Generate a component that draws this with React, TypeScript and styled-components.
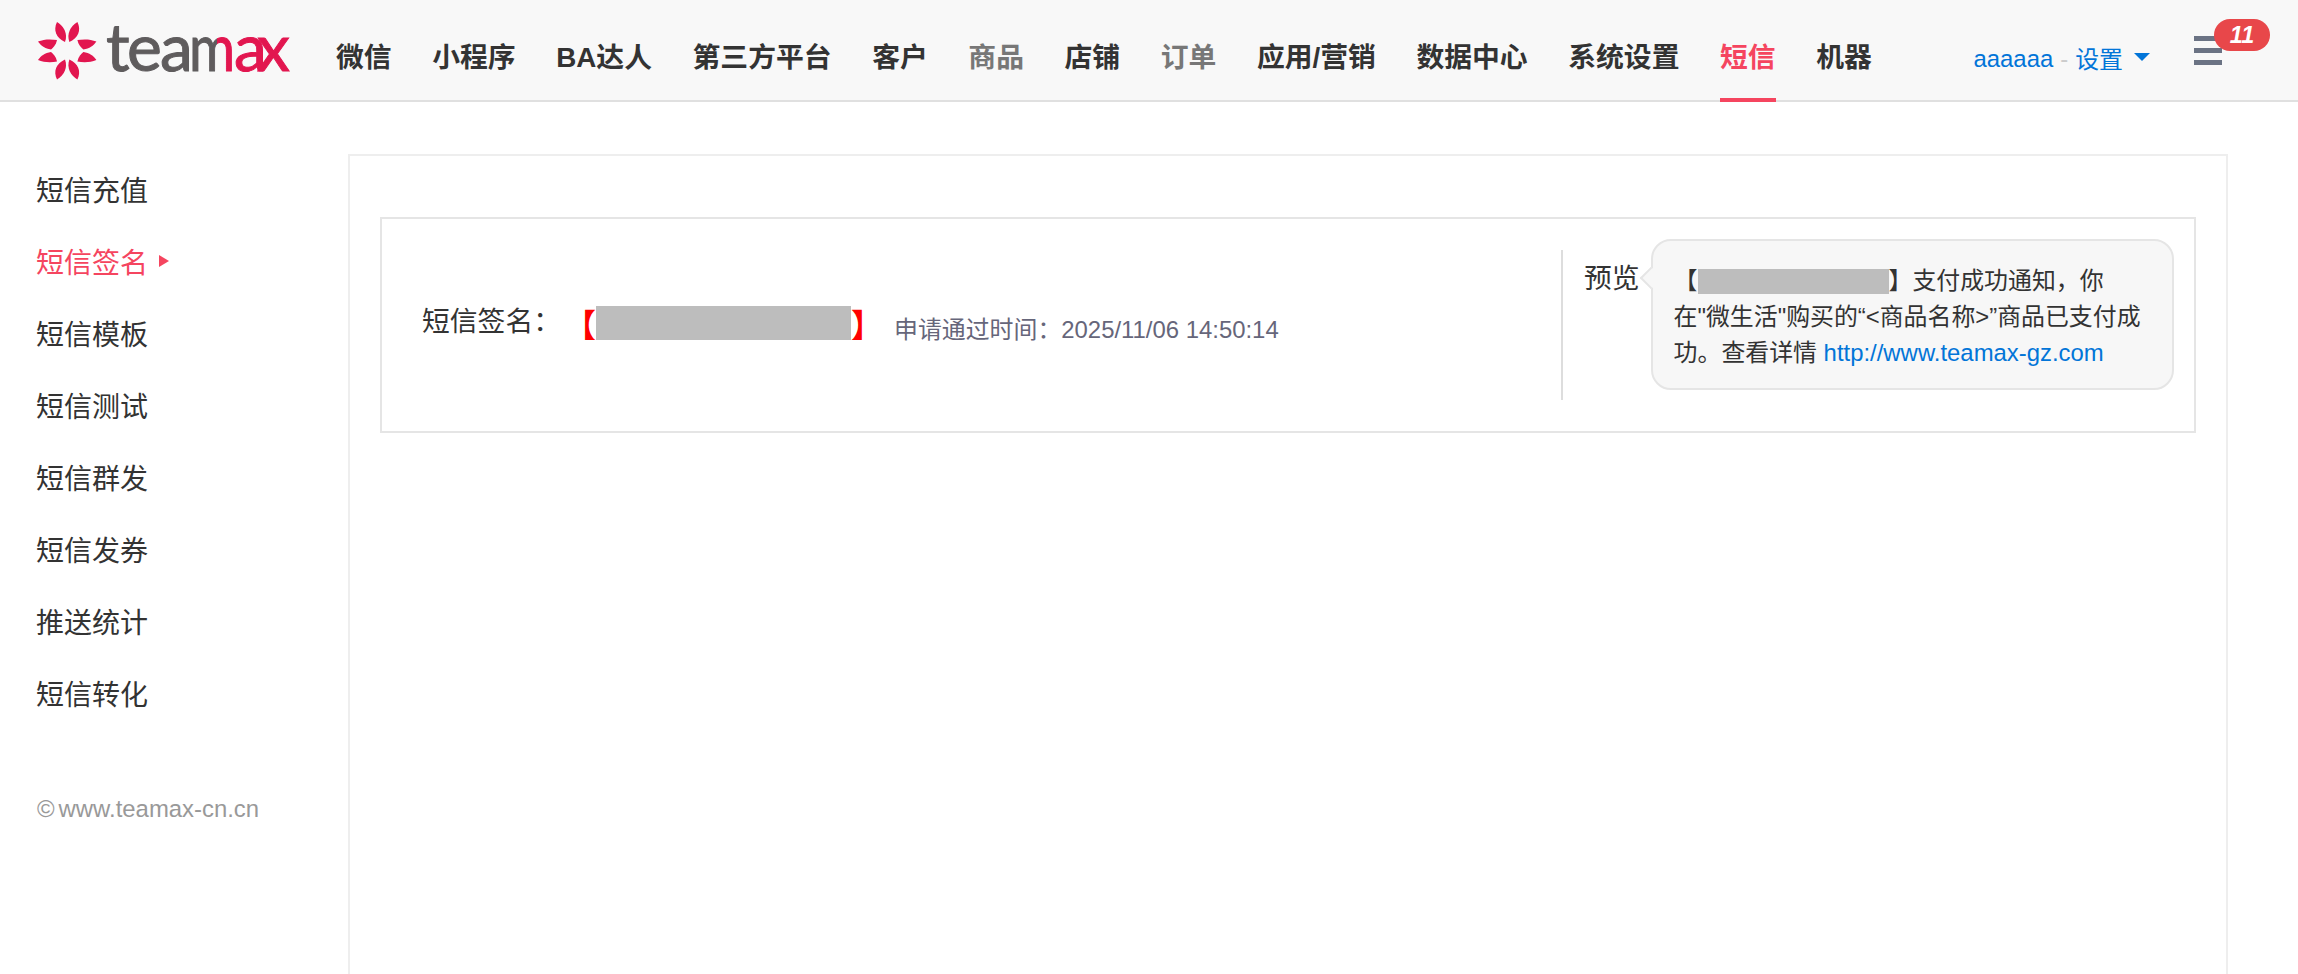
import styled, { createGlobalStyle } from "styled-components";

const navItems = [
  { label: "微信" },
  { label: "小程序" },
  { label: "BA达人" },
  { label: "第三方平台" },
  { label: "客户" },
  { label: "商品", muted: true },
  { label: "店铺" },
  { label: "订单", muted: true },
  { label: "应用/营销" },
  { label: "数据中心" },
  { label: "系统设置" },
  { label: "短信", active: true },
  { label: "机器" },
];

const sideItems = ["短信充值", "短信签名", "短信模板", "短信测试", "短信群发", "短信发券", "推送统计", "短信转化"];

const FONT = `"Liberation Sans", "Noto Sans CJK SC", sans-serif`;
const RED = "#f5455f";
const BLUE = "#0275d8";

const GlobalStyle = createGlobalStyle`
  html, body {
    margin: 0;
    padding: 0;
    background: #fff;
    font-family: ${FONT};
    color: #333;
  }
`;

function Logo() {
  const leaf = "M65 42C56 38 53 30 57 22C64 26 68 34 65 42Z";
  const side = "M38 41.500C44 39 51 39 57 40C56 45 53 48 51 49.500C45 48.500 41 46 38 41.500Z";
  return (
    <LogoSvg viewBox="37 0 256 100" width="256" height="100">
      <defs>
        <linearGradient id="wordmark" gradientUnits="userSpaceOnUse" x1="107" y1="0" x2="288" y2="0">
          <stop offset="0.61" stopColor="#5e5b5d" />
          <stop offset="0.61" stopColor="#e2134f" />
        </linearGradient>
        <filter id="soft">
          <feGaussianBlur stdDeviation="0.5" />
        </filter>
      </defs>
      <g fill="#e2134f" filter="url(#soft)">
        {[leaf, side].map((d) => (
          <g key={d}>
            <path d={d} />
            <path d={d} transform="matrix(-1 0 0 1 134.400 0)" />
            <path d={d} transform="matrix(1 0 0 -1 0 101.600)" />
            <path d={d} transform="matrix(-1 0 0 -1 134.400 101.600)" />
          </g>
        ))}
      </g>
      <text
        y="71"
        fontFamily="Lato, sans-serif"
        fontSize="66"
        fill="url(#wordmark)"
        stroke="url(#wordmark)"
        strokeWidth="1"
        filter="url(#soft)"
      >
        <tspan x="106">t</tspan>
        <tspan x="127">e</tspan>
        <tspan x="160">a</tspan>
        <tspan x="189" textLength="46" lengthAdjust="spacingAndGlyphs">m</tspan>
        <tspan x="234">a</tspan>
        <tspan x="257">x</tspan>
      </text>
    </LogoSvg>
  );
}

export default function App() {
  return (
    <Page>
      <GlobalStyle />
      <Header>
        <Logo />
        <Nav>
          {navItems.map((item) => (
            <NavItem key={item.label} $muted={item.muted} $active={item.active}>
              {item.label}
            </NavItem>
          ))}
        </Nav>
        <UserMenu>
          aaaaaa<UserDash>-</UserDash><UserLink>设置</UserLink><Caret />
        </UserMenu>
        <Hamburger>
          <Bar />
          <Bar />
          <Bar />
          <Badge>11</Badge>
        </Hamburger>
      </Header>
      <Body>
        <Sidebar>
          {sideItems.map((item) => (
            <SideItem key={item} $active={item === "短信签名"}>
              {item}
            </SideItem>
          ))}
          <Copyright>
            <CopyMark>©</CopyMark>www.teamax-cn.cn
          </Copyright>
        </Sidebar>
        <Panel>
          <Card>
            <SignRow>
              <SignLabel>短信签名：</SignLabel>
              <Signature>
                【<SignRedact />】
              </Signature>
              <PassTime>申请通过时间：2025/11/06 14:50:14</PassTime>
            </SignRow>
            <Preview>
              <PreviewLabel>预览</PreviewLabel>
              <Bubble>
                <BubbleBracket>【</BubbleBracket>
                <BubbleRedact />
                <BubbleBracket>】</BubbleBracket>
                支付成功通知，你在"微生活"购买的“&lt;商品名称&gt;”商品已支付成功。查看详情{" "}
                <BubbleLink>http://www.teamax-gz.com</BubbleLink>
              </Bubble>
            </Preview>
          </Card>
        </Panel>
      </Body>
    </Page>
  );
}

const Page = styled.div`
  height: 100vh;
  overflow: hidden;
  background: #fff;
`;

const Header = styled.header`
  display: flex;
  align-items: center;
  box-sizing: border-box;
  height: 102px;
  padding: 0 76px 0 37px;
  background: #f8f8f8;
  border-bottom: 2px solid #e0e0e0;
`;

const LogoSvg = styled.svg`
  flex: none;
  display: block;
`;

const Nav = styled.nav`
  display: flex;
  gap: 40.6px;
  margin-left: 43px;
`;

const NavItem = styled.a<{ $muted?: boolean; $active?: boolean }>`
  position: relative;
  display: block;
  height: 100px;
  line-height: 115px;
  font-size: 27.8px;
  font-weight: 700;
  white-space: nowrap;
  color: ${(p) => (p.$active ? RED : p.$muted ? "#777" : "#333")};

  &::after {
    content: "";
    display: ${(p) => (p.$active ? "block" : "none")};
    position: absolute;
    left: 0;
    right: 0;
    bottom: -2px;
    height: 4px;
    background: ${RED};
  }
`;

const UserMenu = styled.div`
  display: flex;
  align-items: center;
  margin-left: auto;
  margin-top: 18px;
  font-size: 23.9px;
  color: ${BLUE};
  white-space: nowrap;
`;

const UserDash = styled.span`
  margin: 0 7px;
  color: #ccc;
`;

const UserLink = styled.span`
  margin-top: -4px;
`;

const Caret = styled.i`
  width: 0;
  height: 0;
  margin: -4px 0 0 11px;
  border-left: 8px solid transparent;
  border-right: 8px solid transparent;
  border-top: 8px solid ${BLUE};
`;

const Hamburger = styled.div`
  position: relative;
  flex: none;
  display: flex;
  flex-direction: column;
  gap: 7px;
  width: 28px;
  margin-left: 44px;
`;

const Bar = styled.span`
  display: block;
  height: 5px;
  background: #6b7384;
`;

const Badge = styled.span`
  position: absolute;
  top: -17px;
  left: 20px;
  width: 56px;
  height: 32px;
  border-radius: 16px;
  background: #e8474a;
  color: #fff;
  font-size: 23.4px;
  font-weight: 700;
  font-style: italic;
  line-height: 32px;
  text-align: center;
`;

const Body = styled.div`
  display: flex;
  align-items: flex-start;
`;

const Sidebar = styled.aside`
  flex: none;
  box-sizing: border-box;
  width: 348px;
  padding: 51px 0 0 36px;
`;

const SideItem = styled.a<{ $active?: boolean }>`
  display: flex;
  align-items: center;
  height: 72px;
  font-size: 28px;
  color: ${(p) => (p.$active ? RED : "#333")};

  &::after {
    content: "";
    display: ${(p) => (p.$active ? "block" : "none")};
    margin-left: 11px;
    border-left: 10px solid ${RED};
    border-top: 6px solid transparent;
    border-bottom: 6px solid transparent;
  }
`;

const Copyright = styled.div`
  margin: 61px 0 0 1px;
  font-size: 23.9px;
  line-height: 38px;
  color: #999;
`;

const CopyMark = styled.span`
  margin-right: 4px;
`;

const Panel = styled.main`
  flex: none;
  box-sizing: border-box;
  width: 1880px;
  height: 900px;
  margin-top: 52px;
  padding: 61px 30px 0;
  border: 2px solid #eee;
`;

const Card = styled.section`
  display: flex;
  align-items: center;
  box-sizing: border-box;
  height: 216px;
  border: 2px solid #e5e5e5;
`;

const SignRow = styled.div`
  flex: 1;
  display: flex;
  align-items: center;
  padding-left: 40px;
`;

const SignLabel = styled.span`
  margin-bottom: 13px;
  font-size: 27.8px;
  white-space: nowrap;
`;

const Signature = styled.span`
  display: flex;
  align-items: center;
  margin: 0 0 5px 3px;
  font-size: 32px;
  font-weight: 700;
  color: #f00;
`;

const SignRedact = styled.i`
  width: 255px;
  height: 34px;
  background: #bdbdbd;
`;

const PassTime = styled.span`
  margin: 5px 0 0 11px;
  font-size: 23.9px;
  color: #66667a;
  white-space: nowrap;
`;

const Preview = styled.div`
  flex: none;
  display: flex;
  align-items: flex-start;
  box-sizing: border-box;
  width: 633px;
  height: 150px;
  padding-left: 21px;
  border-left: 2px solid #ddd;
`;

const PreviewLabel = styled.span`
  margin-top: 11px;
  font-size: 27.8px;
  line-height: 36px;
  white-space: nowrap;
`;

const Bubble = styled.div`
  position: relative;
  flex: none;
  box-sizing: border-box;
  width: 523px;
  margin: -11px 0 0 11px;
  padding: 20px 21px 17px;
  border: 2px solid #e5e5e5;
  border-radius: 20px;
  background: #f7f7f7;
  font-size: 23.9px;
  line-height: 36px;

  &::before {
    content: "";
    position: absolute;
    left: -10px;
    top: 29px;
    width: 16px;
    height: 16px;
    box-sizing: border-box;
    background: #f7f7f7;
    border-left: 2px solid #e5e5e5;
    border-bottom: 2px solid #e5e5e5;
    transform: rotate(45deg);
  }
`;

const BubbleBracket = styled.span`
  font-family: "Noto Sans CJK SC", sans-serif;
`;

const BubbleRedact = styled.i`
  display: inline-block;
  width: 191px;
  height: 25px;
  vertical-align: -5px;
  background: #bdbdbd;
`;

const BubbleLink = styled.a`
  color: ${BLUE};
`;
